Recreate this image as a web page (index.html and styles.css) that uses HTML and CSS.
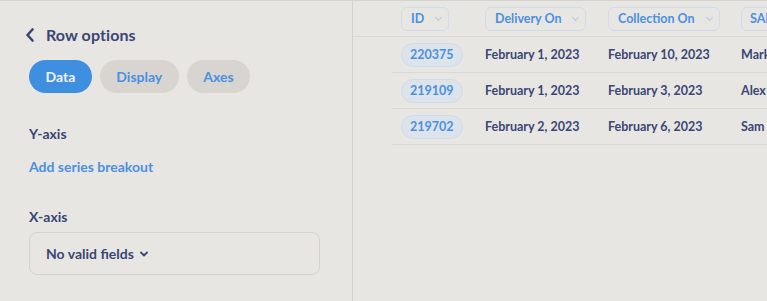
FILE: index.html
```html
<!DOCTYPE html>
<html>
<head>
<meta charset="utf-8">
<link rel="stylesheet" href="styles.css">
</head>
<body>
<div class="app">
  <aside class="sidebar">
    <div class="title-row">
      <svg class="back" width="10" height="14" viewBox="0 0 10 14"><path d="M7.5 1.5 L2.5 7 L7.5 12.5" fill="none" stroke="#3a4675" stroke-width="2.6" stroke-linecap="round" stroke-linejoin="round"/></svg>
      <span class="title">Row options</span>
    </div>
    <div class="tabs">
      <span class="tab active">Data</span>
      <span class="tab">Display</span>
      <span class="tab">Axes</span>
    </div>
    <div class="section">
      <div class="label">Y-axis</div>
      <div class="link">Add series breakout</div>
    </div>
    <div class="section x">
      <div class="label">X-axis</div>
      <div class="select">No valid fields
        <svg width="10" height="8" viewBox="0 0 10 8"><path d="M2 2.5 L5 5.5 L8 2.5" fill="none" stroke="#3a4675" stroke-width="1.8" stroke-linecap="round" stroke-linejoin="round"/></svg>
      </div>
    </div>
  </aside>
  <main class="table-area">
    <div class="row head">
      <div class="cell c-id"><span class="hpill">ID<i class="caret"></i></span></div>
      <div class="cell c-del"><span class="hpill">Delivery On<i class="caret"></i></span></div>
      <div class="cell c-col"><span class="hpill">Collection On<i class="caret"></i></span></div>
      <div class="cell c-sa"><span class="hpill">SALES REP<i class="caret"></i></span></div>
    </div>
    <div class="body">
      <div class="row">
        <div class="cell c-id"><span class="idpill">220375</span></div>
        <div class="cell c-del">February 1, 2023</div>
        <div class="cell c-col">February 10, 2023</div>
        <div class="cell c-sa">Mark</div>
      </div>
      <div class="row">
        <div class="cell c-id"><span class="idpill">219109</span></div>
        <div class="cell c-del">February 1, 2023</div>
        <div class="cell c-col">February 3, 2023</div>
        <div class="cell c-sa">Alex</div>
      </div>
      <div class="row">
        <div class="cell c-id"><span class="idpill">219702</span></div>
        <div class="cell c-del">February 2, 2023</div>
        <div class="cell c-col">February 6, 2023</div>
        <div class="cell c-sa">Sam</div>
      </div>
    </div>
  </main>
</div>
</body>
</html>
```
FILE: styles.css
```css
* { box-sizing: border-box; }
html, body { margin: 0; padding: 0; }
body {
  background: #e8e6e2;
  font-family: Lato, "Open Sans", sans-serif;
  color: #3a4675;
  width: 767px;
  height: 301px;
  overflow: hidden;
}
.app {
  display: flex;
  height: 301px;
  border-top: 1px solid #d6d3ce;
}
.sidebar {
  width: 353px;
  flex: none;
  border-right: 1px solid #d6d3ce;
  padding: 25px 32px 0 29px;
}
.title-row {
  display: flex;
  align-items: center;
  gap: 11px;
  margin-left: -4px;
  height: 17px;
}
.back { display: block; }
.title {
  font-size: 16px;
  font-weight: 700;
  color: #3a4675;
  letter-spacing: 0.1px;
}
.tabs {
  display: flex;
  gap: 8px;
  margin-top: 17px;
}
.tab {
  height: 33px;
  line-height: 33px;
  padding: 0 16.5px;
  border-radius: 17px;
  background: #d8d5d0;
  color: #4a90e2;
  font-size: 14px;
  font-weight: 700;
}
.tab.active {
  background: #3f8fe0;
  color: #f2f1ee;
}
.section { margin-top: 32px; }
.label {
  font-size: 14px;
  font-weight: 700;
  color: #3a4675;
  line-height: 18px;
}
.link {
  margin-top: 15px;
  font-size: 14px;
  font-weight: 700;
  color: #4a90e2;
  line-height: 18px;
}
.section.x { margin-top: 32px; }
.select {
  margin-top: 6px;
  height: 43px;
  border: 1px solid #d6d3ce;
  border-radius: 8px;
  padding: 0 16px;
  display: flex;
  align-items: center;
  gap: 5px;
  font-size: 14px;
  font-weight: 700;
  color: #3a4675;
}
.table-area {
  flex: 1;
  min-width: 0;
  overflow: hidden;
}
.row {
  display: flex;
  height: 36px;
  align-items: center;
  border-bottom: 1px solid #dcd9d4;
  white-space: nowrap;
}
.row.head { padding-left: 48px; }
.body { margin-left: 39px; }
.body .row { padding-left: 9px; }
.cell {
  flex: none;
  font-size: 12.5px;
  font-weight: 700;
  color: #3a4675;
}
.c-id { width: 84px; }
.c-del { width: 123px; }
.c-col { width: 133px; }
.c-sa { width: 120px; }
.hpill {
  display: inline-flex;
  align-items: center;
  height: 24px;
  padding: 0 7px 0 9px;
  border: 1px solid #cfdceb;
  border-radius: 6px;
  color: #4a90e2;
  font-size: 12.5px;
  font-weight: 700;
}
.caret {
  width: 5px;
  height: 5px;
  border-right: 1px solid #b9c8da;
  border-bottom: 1px solid #b9c8da;
  transform: rotate(45deg);
  margin: -3px 0 0 12px;
}
.c-sa .hpill { padding-left: 8px; }
.idpill {
  display: inline-block;
  height: 24px;
  line-height: 22px;
  padding: 0 8px;
  border: 1px solid #cfdceb;
  background: #dde3ea;
  border-radius: 12px;
  color: #4a90e2;
  font-size: 12.5px;
  font-weight: 700;
}
```
